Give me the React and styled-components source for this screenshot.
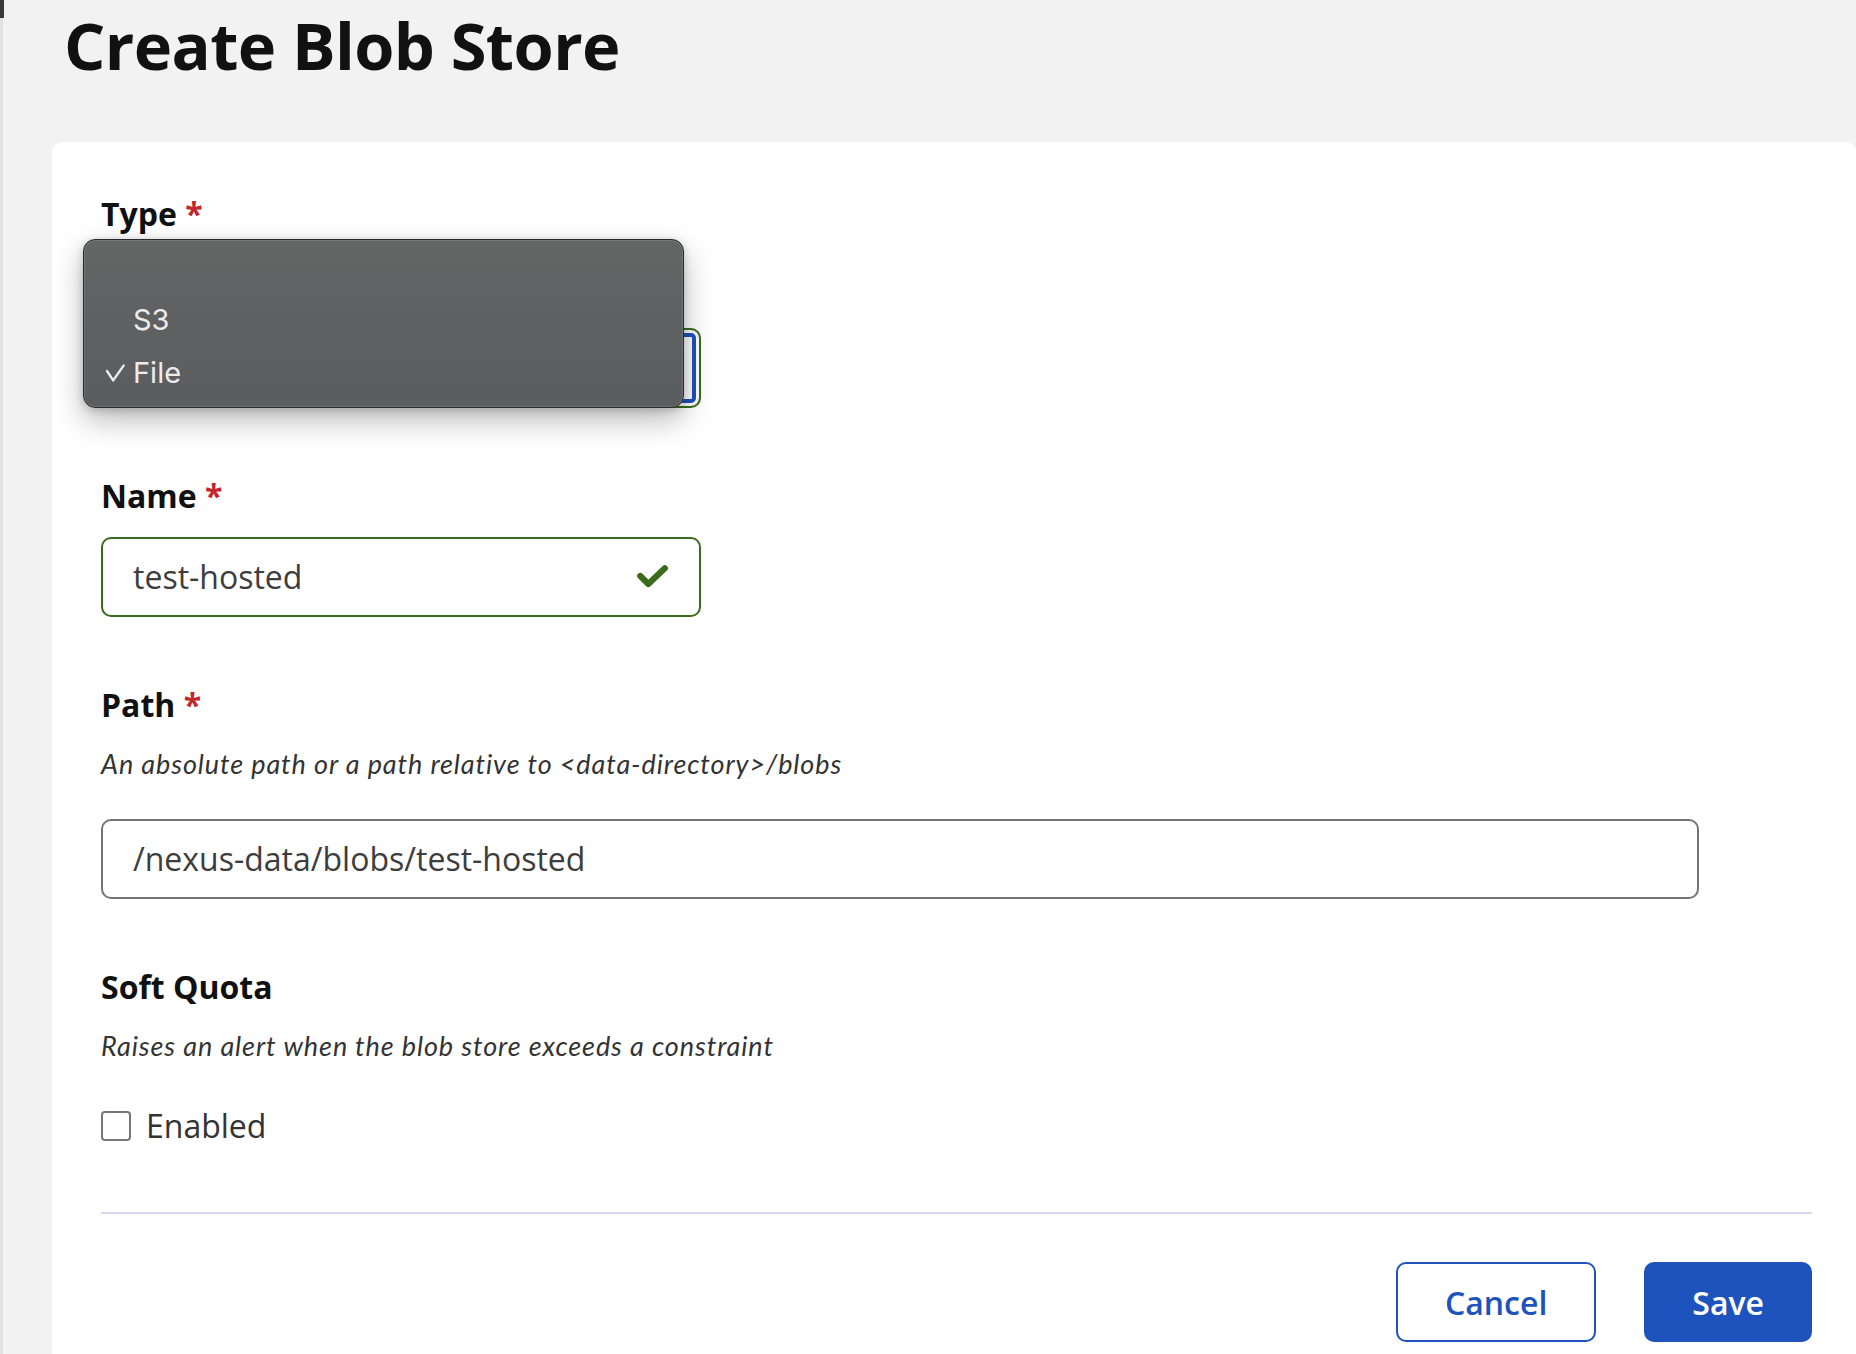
import React from "react";
import styled, { createGlobalStyle } from "styled-components";

const GlobalStyle = createGlobalStyle`
  html, body {
    margin: 0;
    padding: 0;
    overflow: hidden;
    background: #f2f2f2;
  }
  body {
    font-family: "Open Sans", "Noto Sans", sans-serif;
    color: #111;
  }
  *, *::before, *::after { box-sizing: border-box; }
`;

const Page = styled.div`
  display: flex;
  min-height: 100vh;
`;

const EdgeBar = styled.div`
  position: relative;
  flex: 0 0 3px;
  background: #e2e2e2;
  &::before {
    content: "";
    position: absolute;
    top: 0;
    left: 0;
    width: 4px;
    height: 18px;
    background: #3a3a3a;
  }
`;

const Main = styled.main`
  flex: 1;
  min-width: 0;
  padding-left: 49px;
`;

const Title = styled.h1`
  margin: 0 0 52px 12px;
  font-size: 65px;
  line-height: 90px;
  font-weight: 700;
  letter-spacing: -0.6px;
  color: #111;
`;

const Card = styled.section`
  background: #fff;
  border-radius: 10px;
  padding: 49px 44px 49px 49px;
`;

const Field = styled.div`
  position: relative;
  margin-bottom: ${(p) => p.$mb ?? 65}px;
`;

const Label = styled.label`
  display: block;
  font-size: 32px;
  line-height: 45px;
  font-weight: 700;
  color: #111;
  margin-bottom: ${(p) => (p.$withDesc ? 21 : 19)}px;
`;

const Required = styled.span`
  color: #c1272d;
`;

const Description = styled.p`
  margin: 0 0 ${(p) => p.$mb ?? 40}px;
  min-height: 31px;
  font-family: Lato, "Open Sans", sans-serif;
  font-style: italic;
  font-size: 27px;
  line-height: 31px;
  letter-spacing: 0.9px;
  color: #333;
`;

const InputBox = styled.div`
  display: flex;
  align-items: center;
  width: ${(p) => p.$w}px;
  height: 80px;
  padding: 0 31px 0 30px;
  border: 2px solid ${(p) => (p.$valid ? "#3a6b1c" : "#757575")};
  border-radius: 10px;
  background: #fff;
`;

const TextInput = styled.input`
  flex: 1;
  min-width: 0;
  border: none;
  outline: none;
  background: transparent;
  padding: 0;
  font-family: "Open Sans", sans-serif;
  font-size: 32px;
  line-height: 44px;
  color: #3d3d3d;
`;

const SelectBox = styled.div`
  display: flex;
  align-items: center;
  justify-content: flex-end;
  width: 600px;
  height: 80px;
  padding: 0 31px 0 30px;
  border: 2px solid #3a6b1c;
  border-radius: 10px;
  background: #fff;
  box-shadow: inset 0 0 0 3px #fff, inset 0 0 0 7px #1e52bd;
`;

const Menu = styled.div`
  position: absolute;
  top: 48px;
  left: -18px;
  z-index: 10;
  width: 601px;
  padding: 0 0 8px;
  border: 1px solid #2a2a2a;
  border-radius: 12px;
  background: linear-gradient(180deg, #646565 0%, #5f6061 50%, #5a5d60 100%);
  box-shadow: inset 0 0 0 1px rgba(255, 255, 255, 0.12),
    0 12px 30px rgba(0, 0, 0, 0.28), 0 2px 8px rgba(0, 0, 0, 0.18);
  font-family: Inter, "Liberation Sans", sans-serif;
  color: #ececec;
`;

const MenuItem = styled.div`
  display: flex;
  align-items: center;
  height: 53px;
  padding-left: 21px;
  font-size: 29px;
`;

const CheckSlot = styled.span`
  display: flex;
  align-items: center;
  width: 28px;
  height: 100%;
`;

const CheckRow = styled.div`
  display: flex;
  align-items: center;
  height: 44px;
`;

const CheckBox = styled.span`
  flex: 0 0 30px;
  width: 30px;
  height: 30px;
  margin-right: 15px;
  border: 2px solid #777;
  border-radius: 4px;
  background: #fff;
`;

const CheckText = styled.span`
  font-size: 32px;
  line-height: 44px;
  color: #333;
`;

const Divider = styled.hr`
  margin: 0 0 48px;
  border: none;
  height: 2px;
  background: #d6d8ef;
`;

const ButtonRow = styled.div`
  display: flex;
  justify-content: flex-end;
  gap: 48px;
`;

const Button = styled.button`
  height: 80px;
  padding: 0 ${(p) => (p.$primary ? 46 : 47)}px;
  border: 2px solid #1e52bd;
  border-radius: 10px;
  background: ${(p) => (p.$primary ? "#1e52bd" : "#fff")};
  color: ${(p) => (p.$primary ? "#fff" : "#1e52bd")};
  font-family: "Open Sans", sans-serif;
  font-size: 32px;
  font-weight: 600;
  cursor: pointer;
`;

const ValidCheck = () => (
  <svg width="31" height="24" viewBox="0 0 31 24" aria-hidden="true">
    <polyline
      points="3.3,11 11.3,19 27.8,3.3"
      fill="none"
      stroke="#3a6b1c"
      strokeWidth="6.2"
      strokeLinecap="round"
      strokeLinejoin="round"
    />
  </svg>
);

const MenuCheck = () => (
  <svg width="20" height="18" viewBox="0 0 20 18" aria-hidden="true">
    <polyline
      points="2,7 8.2,16.4 18.6,1.6"
      fill="none"
      stroke="#ececec"
      strokeWidth="2.4"
      strokeLinecap="round"
      strokeLinejoin="round"
    />
  </svg>
);

const Chevron = () => (
  <svg width="20" height="12" viewBox="0 0 20 12" aria-hidden="true">
    <polyline points="2,2 10,10 18,2" fill="none" stroke="#333" strokeWidth="2.5" />
  </svg>
);

export default function App() {
  return (
    <>
      <GlobalStyle />
      <Page>
        <EdgeBar />
        <Main>
          <Title>Create Blob Store</Title>
          <Card>
            <Field>
              <Label $withDesc>
                Type <Required>*</Required>
              </Label>
              <Description aria-hidden="true" />
              <SelectBox aria-label="File">
                <Chevron />
              </SelectBox>
              <Menu role="listbox">
                <MenuItem>
                  <CheckSlot />
                </MenuItem>
                <MenuItem>
                  <CheckSlot />
                  S3
                </MenuItem>
                <MenuItem>
                  <CheckSlot>
                    <MenuCheck />
                  </CheckSlot>
                  File
                </MenuItem>
              </Menu>
            </Field>

            <Field>
              <Label>
                Name <Required>*</Required>
              </Label>
              <InputBox $w={600} $valid>
                <TextInput defaultValue="test-hosted" readOnly />
                <ValidCheck />
              </InputBox>
            </Field>

            <Field>
              <Label $withDesc>
                Path <Required>*</Required>
              </Label>
              <Description>
                An absolute path or a path relative to &lt;data-directory&gt;/blobs
              </Description>
              <InputBox $w={1598}>
                <TextInput defaultValue="/nexus-data/blobs/test-hosted" readOnly />
              </InputBox>
            </Field>

            <Field $mb={64}>
              <Label $withDesc>Soft Quota</Label>
              <Description $mb={43}>
                Raises an alert when the blob store exceeds a constraint
              </Description>
              <CheckRow>
                <CheckBox />
                <CheckText>Enabled</CheckText>
              </CheckRow>
            </Field>

            <Divider />

            <ButtonRow>
              <Button>Cancel</Button>
              <Button $primary>Save</Button>
            </ButtonRow>
          </Card>
        </Main>
      </Page>
    </>
  );
}
